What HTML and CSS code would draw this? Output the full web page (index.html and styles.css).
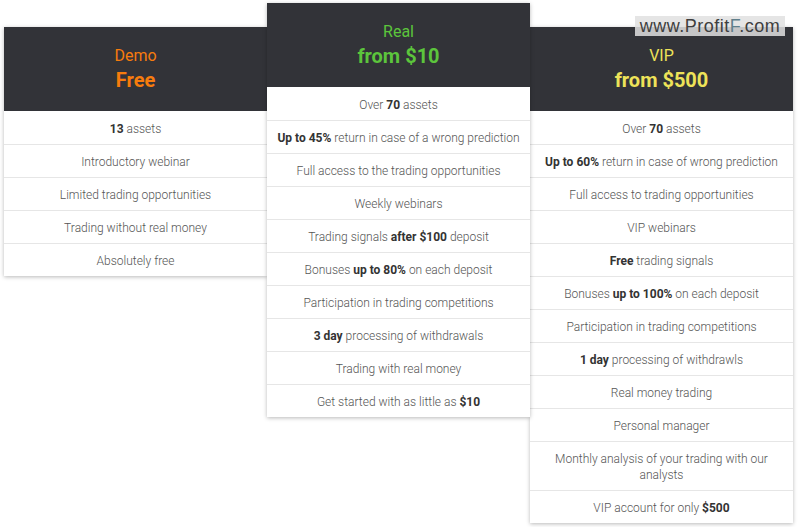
FILE: index.html
```html
<!DOCTYPE html>
<html>
<head>
<meta charset="utf-8">
<link rel="stylesheet" href="styles.css">
</head>
<body>
<div class="plans">
  <div class="card demo">
    <div class="head">
      <div class="name">Demo</div>
      <div class="price">Free</div>
    </div>
    <ul class="rows">
      <li><b>13</b> assets</li>
      <li>Introductory webinar</li>
      <li>Limited trading opportunities</li>
      <li>Trading without real money</li>
      <li>Absolutely free</li>
    </ul>
  </div>
  <div class="card real">
    <div class="head">
      <div class="name">Real</div>
      <div class="price">from $10</div>
    </div>
    <ul class="rows">
      <li>Over <b>70</b> assets</li>
      <li><b>Up to 45%</b> return in case of a wrong prediction</li>
      <li>Full access to the trading opportunities</li>
      <li>Weekly webinars</li>
      <li>Trading signals <b>after $100</b> deposit</li>
      <li>Bonuses <b>up to 80%</b> on each deposit</li>
      <li>Participation in trading competitions</li>
      <li><b>3 day</b> processing of withdrawals</li>
      <li>Trading with real money</li>
      <li>Get started with as little as <b>$10</b></li>
    </ul>
  </div>
  <div class="card vip">
    <div class="head">
      <div class="name">VIP</div>
      <div class="price">from $500</div>
    </div>
    <ul class="rows">
      <li>Over <b>70</b> assets</li>
      <li><b>Up to 60%</b> return in case of wrong prediction</li>
      <li>Full access to trading opportunities</li>
      <li>VIP webinars</li>
      <li><b>Free</b> trading signals</li>
      <li>Bonuses <b>up to 100%</b> on each deposit</li>
      <li>Participation in trading competitions</li>
      <li><b>1 day</b> processing of withdrawls</li>
      <li>Real money trading</li>
      <li>Personal manager</li>
      <li>Monthly analysis of your trading with our analysts</li>
      <li>VIP account for only <b>$500</b></li>
    </ul>
  </div>
</div>
<div class="watermark">www.Profit<span class="f">F</span>.com</div>
</body>
</html>
```
FILE: styles.css
```css
html, body {
  margin: 0;
  padding: 0;
  background: #ffffff;
}
body {
  font-family: Roboto, "Liberation Sans", sans-serif;
  width: 800px;
  height: 527px;
  overflow: hidden;
  position: relative;
}
.plans {
  display: flex;
  align-items: flex-start;
  padding: 27px 0 0 4px;
}
.card {
  width: 263px;
  flex: none;
  background: #fff;
  box-shadow: 0 1px 4px rgba(0, 0, 0, 0.28);
}
.real {
  margin-top: -24px;
  position: relative;
  z-index: 2;
}
.vip {
  position: relative;
  z-index: 1;
}
.head {
  background: #323338;
  text-align: center;
  padding: 19px 0 17px;
  height: 48px;
}
.name {
  font-size: 16px;
  line-height: 20px;
  font-weight: 400;
}
.price {
  font-size: 20px;
  line-height: 28px;
  font-weight: 700;
}
.demo .head { color: #f77c0d; }
.real .head { color: #5cc53c; }
.vip .head { color: #eee359; }
.rows {
  list-style: none;
  margin: 0;
  padding: 0;
}
.rows li {
  border-top: 1px solid #e6e6e6;
  padding: 9px 8px 7px;
  line-height: 16px;
  font-size: 12px;
  font-weight: 300;
  color: #555;
  text-align: center;
}
.rows li:first-child {
  border-top: none;
  padding-top: 10px;
}
.rows b {
  font-weight: 700;
  color: #333;
}
.watermark {
  position: absolute;
  z-index: 5;
  top: 16px;
  left: 635px;
  width: 150px;
  height: 20px;
  background: rgba(225, 225, 225, 0.85);
  font-family: "Liberation Sans", Arial, sans-serif;
  font-size: 18px;
  line-height: 20px;
  color: #3e3e3e;
  text-align: center;
  letter-spacing: 0.5px;
}
.watermark .f {
  color: #5f7f8b;
}
```
